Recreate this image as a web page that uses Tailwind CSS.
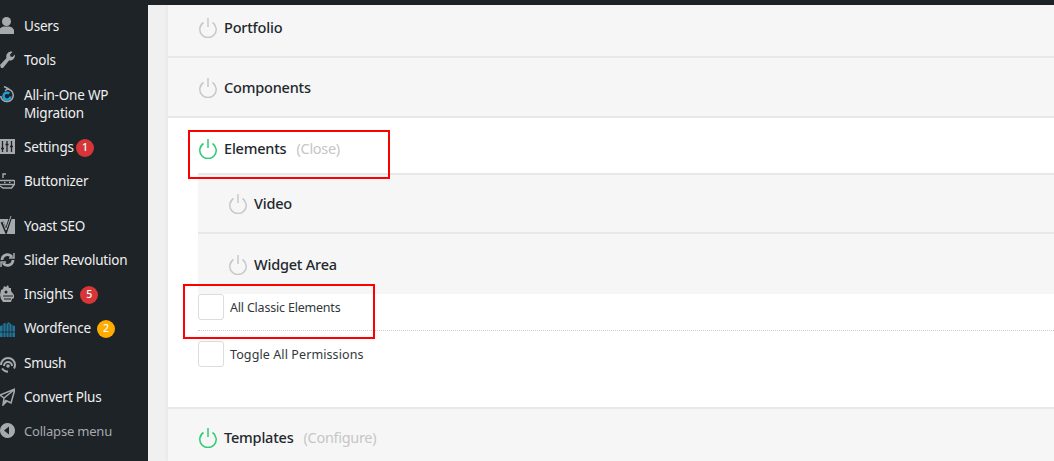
<!DOCTYPE html>
<html lang="en">
<head>
  <meta charset="UTF-8">
  <title>Role permissions</title>
  <script src="https://cdn.jsdelivr.net/npm/@tailwindcss/browser@4"></script>
</head>
<body class="bg-[#f0f0f0] font-['Noto_Sans','Open_Sans',sans-serif] overflow-hidden">
  <div class="relative flex h-[461px] w-[1054px] overflow-hidden">
    <!-- Sidebar -->
    <aside class="w-[148px] h-full shrink-0 bg-[#1d2327] pt-[9px] text-[13.5px] tracking-[-0.2px] text-[#f0f0f1]">
      <a class="flex items-center h-[34px] pl-6 pt-[1px] relative">
        <svg class="absolute left-[-1px] top-[8px] w-[15px] h-[17px] text-[#a7aaad]" viewBox="0 0 15 17" fill="currentColor"><circle cx="7.500" cy="4.500" r="4.500"/><path d="M0 17v-3c0-3 3-4 4.500-4.500h6C12 10 15 11 15 14v3z"/></svg>
        Users
      </a>
      <a class="flex items-center h-[34px] pl-6 pt-[1px] relative">
        <svg class="absolute left-0 top-[8px] w-[15px] h-[17px] text-[#a7aaad]" viewBox="0 0 15 17" fill="currentColor"><path d="M0 14l6.500-7C5.500 3.500 8 .5 11.500.5l1 .5-2.500 2.500.5 2 2 .5 2.300-2.500c.6 3.500-2.300 6.500-5.800 6L3 17H1z"/></svg>
        Tools
      </a>
      <a class="block h-[53px] pl-6 pt-[9px] leading-[18px] relative">
        <svg class="absolute left-0 top-[9px] w-[14px] h-[18px]" viewBox="0 0 14 18" fill="none"><path d="M4 .5l4 2-3 2.500" stroke="#a7aaad" stroke-width="1.500"/><path d="M7 3a6.300 6.300 0 1 1-6.300 7" stroke="#a7aaad" stroke-width="1.500"/><path d="M10.500 10.500a3.500 3.500 0 1 1-1.200-3" stroke="#1e9fd8" stroke-width="2.500"/></svg>
        All-in-One WP Migration
      </a>
      <a class="flex items-center h-[34px] pl-6 pt-[1px] relative">
        <svg class="absolute left-0 top-[9px] w-[15px] h-[15px]" viewBox="0 0 15 15"><rect width="15" height="15" fill="#a7aaad"/><path d="M2.500 2v11M7 2v11M11.500 2v11" stroke="#1d2327" stroke-width="1.300"/><path d="M1 9.500h3M5.500 5.500h3M10 7.500h3" stroke="#1d2327" stroke-width="1.500"/></svg>
        Settings
        <span class="ml-[2px] w-[18px] h-[18px] rounded-full bg-[#d63638] text-white text-[10.500px] flex items-center justify-center font-medium">1</span>
      </a>
      <a class="flex items-center h-[34px] pl-6 pt-[1px] relative">
        <svg class="absolute left-0 top-[8px] w-[15px] h-[18px] text-[#a7aaad]" viewBox="0 0 15 18" fill="none" stroke="currentColor" stroke-width="1.400"><path d="M3 6V2h3M0 8.500h14c.6 0 .6 1 .6 1.500v2l-3 4H3l-3-2"/><path d="M0 12.500h14.500"/><path d="M4 10.500h1.500M9 10.500h1.500"/></svg>
        Buttonizer
      </a>
      <a class="flex items-center h-[34px] pl-6 pt-[1px] mt-[11px] relative">
        <svg class="absolute left-0 top-[6px] w-[15px] h-[21px]" viewBox="0 0 15 21"><rect y="4" width="15" height="15" fill="#a7aaad"/><path d="M2 7l4 9 5-15" fill="none" stroke="#1d2327" stroke-width="3"/><path d="M3 7l3 8 5-14" fill="none" stroke="#a7aaad" stroke-width="1"/></svg>
        Yoast SEO
      </a>
      <a class="flex items-center h-[34px] pl-6 pt-[1px] relative">
        <svg class="absolute left-0 top-[9px] w-[15px] h-[16px] text-[#a7aaad]" viewBox="0 0 15 16" fill="none" stroke="currentColor" stroke-width="2.800"><path d="M2 8a5.500 5.500 0 0 1 10-3"/><path d="M13 8a5.500 5.500 0 0 1-10 3"/><path d="M9 6l5 0V1M6 10l-5 0v5" stroke-width="1.500"/></svg>
        Slider Revolution
      </a>
      <a class="flex items-center h-[34px] pl-6 pt-[1px] relative">
        <svg class="absolute left-0 top-[7px] w-[15px] h-[20px] text-[#a7aaad]" viewBox="0 0 15 20" fill="currentColor"><path d="M1 6l2-1 1-3 2 1 2-2 1 3 2 0 0 3 3 4v3l-2 1-1 3H3l-2-3-1-4z"/><circle cx="6" cy="8" r="1.500" fill="#1d2327"/><path d="M3 12h10M4 15h7" stroke="#1d2327"/></svg>
        Insights
        <span class="ml-[7px] w-[18px] h-[18px] rounded-full bg-[#d63638] text-white text-[10.500px] flex items-center justify-center font-medium">5</span>
      </a>
      <a class="flex items-center h-[34px] pl-6 pt-[1px] relative">
        <svg class="absolute left-0 top-[9px] w-[15px] h-[17px] text-[#21759b]" viewBox="0 0 15 17" fill="currentColor"><path d="M0 6l3-1 1-2 3 1 1-2 3 2 1 1 3 1v11H0z"/><path d="M3 5v12M6 4v13M9 4v13M12 5v12M0 12h15" stroke="#1d2327" stroke-width=".8"/></svg>
        Wordfence
        <span class="ml-[6px] w-[18px] h-[18px] rounded-full bg-[#ffab00] text-white text-[10.500px] flex items-center justify-center font-medium">2</span>
      </a>
      <a class="flex items-center h-[34px] pl-6 pt-[1px] mt-[1px] relative">
        <svg class="absolute left-0 top-[7px] w-[16px] h-[20px] text-[#a7aaad]" viewBox="0 0 16 20" fill="none" stroke="currentColor" stroke-width="2"><path d="M1 12a7 7 0 1 1 14 0c0 1.500-.3 2.500-1 3.500"/><path d="M4 13a4 4 0 1 1 8 0"/><circle cx="8" cy="13" r="1.800" fill="currentColor" stroke="none"/><path d="M2 15.500c1.500 2 3.500 3.200 6 3.200"/></svg>
        Smush
      </a>
      <a class="flex items-center h-[34px] pl-6 pt-[1px] relative">
        <svg class="absolute left-0 top-[8px] w-[15px] h-[18px] text-[#a7aaad]" viewBox="0 0 15 18" fill="none" stroke="currentColor" stroke-width="1.500"><path d="M15 1L0 7l4 3-1 7 4-4 4 2zM15 1L4 10M3 17l3-5"/></svg>
        Convert Plus
      </a>
      <a class="flex items-center h-[34px] pl-6 pt-[1px] text-[13px] tracking-[-0.2px] text-[#a7aaad] relative">
        <svg class="absolute left-0 top-[9px] w-[15px] h-[15px] text-[#a7aaad]" viewBox="0 0 15 15" fill="currentColor"><path fill-rule="evenodd" d="M7.500 0a7.500 7.500 0 1 1-.01 0zM9 3.500L4 7.500l5 4z"/></svg>
        Collapse menu
      </a>
    </aside>

    <!-- Main -->
    <main class="flex-1 min-w-0">
      <div class="h-[5px] bg-[#1d2327]"></div>
      <div class="ml-5 bg-white text-[#23282d] text-[14.500px] font-medium tracking-[-0.2px] shadow-[-2px_0_3px_rgba(0,0,0,0.03)]">
        <div class="flex items-center h-[53px] pl-[31px] pb-[5px] bg-[#f6f6f6] border-b-2 border-[#e8e8e8]">
          <svg class="w-[18px] h-[20px] mr-[7px]" viewBox="0 0 18 20" fill="none" stroke="#c8c8c8" stroke-width="1.500"><path d="M4.500 4.500a8.200 8.200 0 1 0 9 0"/><path d="M9 0v9"/></svg>
          Portfolio
        </div>
        <div class="flex items-center h-[60px] pl-[31px] pt-[1px] bg-[#f6f6f6] border-b-2 border-[#e8e8e8]">
          <svg class="w-[18px] h-[20px] mr-[7px]" viewBox="0 0 18 20" fill="none" stroke="#c8c8c8" stroke-width="1.500"><path d="M4.500 4.500a8.200 8.200 0 1 0 9 0"/><path d="M9 0v9"/></svg>
          Components
        </div>
        <div class="flex items-center h-[55px] pl-[31px] pt-[6px]">
          <svg class="w-[18px] h-[20px] mr-[7px]" viewBox="0 0 18 20" fill="none" stroke="#2ecc71" stroke-width="1.500"><path d="M4.500 4.500a8.200 8.200 0 1 0 9 0"/><path d="M9 0v9"/></svg>
          Elements
          <span class="ml-[10px] font-normal text-[#c6c6c6] tracking-[-0.3px]">(Close)</span>
        </div>
        <div class="ml-[30px] bg-[#f6f6f6]">
          <div class="flex items-center h-[61px] pl-[31px] border-y-2 border-[#e8e8e8]">
            <svg class="w-[18px] h-[20px] mr-[7px]" viewBox="0 0 18 20" fill="none" stroke="#c8c8c8" stroke-width="1.500"><path d="M4.500 4.500a8.200 8.200 0 1 0 9 0"/><path d="M9 0v9"/></svg>
            Video
          </div>
          <div class="flex items-center h-[60px] pl-[31px] pt-[1px]">
            <svg class="w-[18px] h-[20px] mr-[7px]" viewBox="0 0 18 20" fill="none" stroke="#c8c8c8" stroke-width="1.500"><path d="M4.500 4.500a8.200 8.200 0 1 0 9 0"/><path d="M9 0v9"/></svg>
            Widget Area
          </div>
        </div>
        <div class="ml-[30px] h-[113px] text-[12.5px] font-normal text-[#32373c]">
          <label class="flex items-center h-[37px] border-b border-dotted border-[#cfcfcf] pb-[10px]">
            <span class="w-[26px] h-[26px] rounded-[3px] border border-[#dcdcdc] bg-white shrink-0 mr-[6px]"></span>
            <span class="pt-[2px]">All Classic Elements</span>
          </label>
          <label class="flex items-center h-[26px] mt-[10px]">
            <span class="w-[26px] h-[26px] rounded-[3px] border border-[#dcdcdc] bg-white shrink-0 mr-[6px]"></span>
            <span class="pt-[2px] tracking-[0.1px]">Toggle All Permissions</span>
          </label>
        </div>
        <div class="flex items-center h-[54px] pl-[31px] pt-[6px] bg-[#f6f6f6] border-t-2 border-[#e8e8e8]">
          <svg class="w-[18px] h-[20px] mr-[7px]" viewBox="0 0 18 20" fill="none" stroke="#2ecc71" stroke-width="1.500"><path d="M4.500 4.500a8.200 8.200 0 1 0 9 0"/><path d="M9 0v9"/></svg>
          Templates
          <span class="ml-[10px] font-normal text-[#c6c6c6] tracking-[-0.3px]">(Configure)</span>
        </div>
      </div>
    </main>

    <!-- Annotation boxes -->
    <div class="absolute left-[188px] top-[130px] w-[202px] h-[49px] border-2 border-[#ff0000]"></div>
    <div class="absolute left-[183px] top-[284px] w-[192px] h-[55px] border-2 border-[#ff0000]"></div>
  </div>
</body>
</html>
